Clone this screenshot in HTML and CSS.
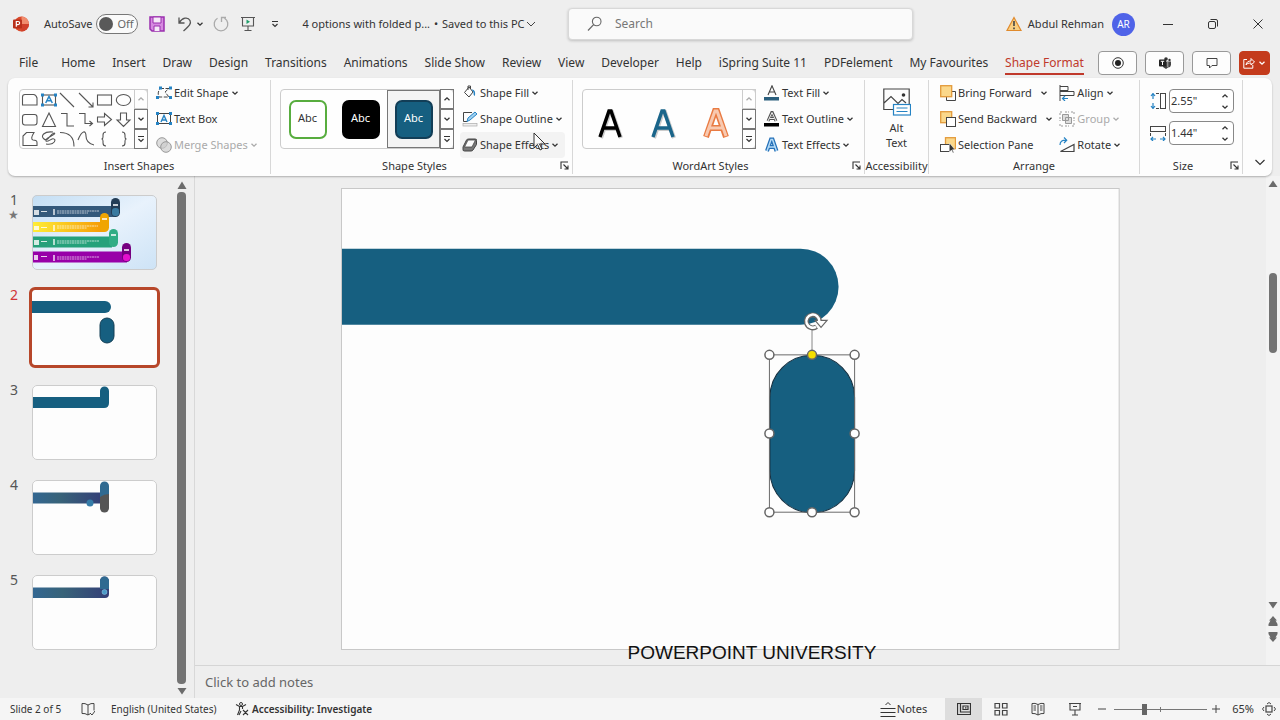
FILE: index.html
```html
<!DOCTYPE html>
<html lang="en">
<head>
<meta charset="utf-8">
<title>4 options with folded p... - PowerPoint</title>
<link rel="stylesheet" href="styles.css">
</head>
<body>
<svg class="sprite" aria-hidden="true">
  <symbol id="chev" viewBox="0 0 8 8"><path d="M1.500 2.800 4 5.200 6.500 2.800" fill="none" stroke="currentColor" stroke-width="1.300"/></symbol>
  <symbol id="chev-up" viewBox="0 0 8 8"><path d="M1.500 5.200 4 2.800 6.500 5.200" fill="none" stroke="currentColor" stroke-width="1.300"/></symbol>
  <symbol id="more" viewBox="0 0 8 8"><path d="M1 1.500H7M1.500 4 4 6.500 6.500 4" fill="none" stroke="currentColor" stroke-width="1.200"/></symbol>
  <symbol id="launch" viewBox="0 0 9 9"><path d="M1 8V1H8M3.500 3.500 8 8M8 4.500V8H4.500" fill="none" stroke="currentColor" stroke-width="1.100"/></symbol>
</svg>

<header class="titlebar">
  <div class="title-left">
    <svg class="i16" viewBox="0 0 16 16"><circle cx="8.500" cy="8" r="7.500" fill="#d9492b"/><path d="M8.500.5A7.500 7.500 0 0 1 16 8H8.500z" fill="#f08b6c"/><path d="M8.500 15.500A7.500 7.500 0 0 0 16 8H8.500z" fill="#d0402a"/><rect x="0" y="3.500" width="9" height="9" rx="1" fill="#b9301a"/><path d="M3.300 10.700V5.500h1.800a1.500 1.500 0 0 1 0 3.100H3.300" fill="none" stroke="#fff" stroke-width="1.200"/></svg>
    <label class="autosave" for="autosave">AutoSave</label>
    <span class="toggle"><input type="checkbox" id="autosave"><span>Off</span></span>
    <button class="tb save" aria-label="Save"><svg class="i16" viewBox="0 0 16 16"><path d="M1 1h14v14H3L1 13z" fill="#d68be0" stroke="#9a2fae" stroke-width="1.500"/><path d="M4 1h8v6H4z" fill="#f6e9f8" stroke="#9a2fae"/><path d="M5 15v-5h6v5" fill="#f6e9f8" stroke="#9a2fae"/></svg></button>
    <button class="tb undo" aria-label="Undo"><svg class="i16" viewBox="0 0 16 16"><path d="M2 1.500V7h5.500M2.300 6.800C5 1.500 11 .5 13 4.500c1.500 3-.5 5-6.500 10.500" fill="none" stroke="#555" stroke-width="1.300"/></svg><svg class="i8" ><use href="#chev"/></svg></button>
    <button class="tb redo" aria-label="Redo"><svg class="i16" viewBox="0 0 16 16"><path d="M4.500 2.200a6.800 6.800 0 1 0 7 0M3 1.500h4.500V6" fill="none" stroke="#aaa" stroke-width="1.300" transform="matrix(-1 0 0 1 16 0)"/></svg></button>
    <button class="tb present" aria-label="Start from beginning"><svg class="i16" viewBox="0 0 16 16"><path d="M1 1.500h14M2.500 1.500V10h11V1.500M8 10v4.500M4.500 14.500h7" fill="none" stroke="#555" stroke-width="1.100"/><path d="M6.500 3.500v4.500L10 5.700z" fill="#1e9e6a"/></svg></button>
    <button class="tb custom" aria-label="Customize"><svg class="i8"><use href="#more"/></svg></button>
    <span class="doc">4 options with folded p...</span><span class="dot">•</span><span class="saved">Saved to this PC</span>
    <svg class="i12" viewBox="0 0 12 12"><path d="M2 4l4 4 4-4" fill="none" stroke="#444"/></svg>
  </div>
  <div class="search">
    <svg class="i16" viewBox="0 0 16 16"><circle cx="9.700" cy="5.500" r="4.300" fill="none" stroke="#666" stroke-width="1.100"/><path d="M6.600 8.700 1 14.500" stroke="#666" stroke-width="1.200"/></svg>
    <input type="text" placeholder="Search" aria-label="Search">
  </div>
  <div class="title-right">
    <svg class="i16" viewBox="0 0 16 16"><path d="M8 1.500 15 14.500H1z" fill="#f9cf82" stroke="#e08a2c" stroke-width="1.200"/><path d="M8 5v5M8 11.500v1.700" stroke="#444" stroke-width="1.600"/></svg>
    <span class="user">Abdul Rehman</span><span class="avatar">AR</span>
    <button class="win" aria-label="Minimize"><svg class="i10" viewBox="0 0 10 10"><path d="M0 5.500h10" stroke="#333"/></svg></button>
    <button class="win" aria-label="Restore"><svg class="i10" viewBox="0 0 10 10"><rect x=".5" y="2.500" width="7" height="7" rx="1.500" fill="none" stroke="#333"/><path d="M2.500.5H8A1.500 1.500 0 0 1 9.500 2v5.500" fill="none" stroke="#333"/></svg></button>
    <button class="win" aria-label="Close"><svg class="i10" viewBox="0 0 10 10"><path d="M.5.500l9 9M9.500.500l-9 9" stroke="#333"/></svg></button>
  </div>
</header>

<div class="tabbar">
  <nav class="tabs">
    <a href="#" class="file">File</a><a href="#">Home</a><a href="#">Insert</a><a href="#">Draw</a><a href="#">Design</a><a href="#">Transitions</a><a href="#">Animations</a><a href="#">Slide Show</a><a href="#">Review</a><a href="#">View</a><a href="#">Developer</a><a href="#">Help</a><a href="#">iSpring Suite 11</a><a href="#">PDFelement</a><a href="#">My Favourites</a><a href="#" class="active">Shape Format</a>
  </nav>
  <div class="tab-actions">
    <button class="pill" aria-label="Record"><svg class="i12" viewBox="0 0 12 12"><circle cx="6" cy="6" r="5.300" fill="none" stroke="#333"/><circle cx="6" cy="6" r="3" fill="#222"/></svg></button>
    <button class="pill" aria-label="Teams"><svg class="i12" viewBox="0 0 12 12"><circle cx="7" cy="2" r="1.800" fill="#333"/><circle cx="10.500" cy="3" r="1.200" fill="#333"/><path d="M5 4.500h7V8a3 3 0 0 1-3 2.500L7 12l-3-2z" fill="#444"/><path d="M8.800 4.500V10" stroke="#ddd" stroke-width=".7"/><rect y="2.500" width="7" height="7" rx=".8" fill="#222"/><path d="M1.800 4.300h3.400M3.500 4.300v3.700" stroke="#fff"/></svg></button>
    <button class="pill" aria-label="Comments"><svg class="i12" viewBox="0 0 12 12"><path d="M1 1.500h10v7H6L3.500 11V8.500H1z" fill="none" stroke="#444"/></svg></button>
    <button class="pill share" aria-label="Share"><svg class="i12" viewBox="0 0 12 12"><path d="M4 2.500H.8v8.700h9V8M3 8c.5-3 2-4 5-4V1.500L11.500 5 8 8V6C5.500 6 4 6.500 3 8z" fill="none" stroke="#fff"/></svg><svg class="i8"><use href="#chev"/></svg></button>
  </div>
</div>

<section class="ribbon">
  <div class="group g-insert">
    <div class="body">
      <div class="gallery">
        <svg class="shapes" viewBox="0 0 114 58" fill="none" stroke="#555" stroke-width="1.100">
          <path d="M2.500 15V7q0-2.500 2.500-2.500h8.500q2.500 0 3.500 3.500v7z"/>
          <rect x="22.500" y="5" width="13" height="10"/><path d="M25.700 13 29 6.500 32.300 13M27 10.800h4" stroke="#2583c4" stroke-width="1.500"/><g fill="#2583c4" stroke="none"><rect x="21" y="3.500" width="3" height="3"/><rect x="34" y="3.500" width="3" height="3"/><rect x="21" y="13.500" width="3" height="3"/><rect x="34" y="13.500" width="3" height="3"/></g>
          <path d="M40 3l14 14M59 3l14 14M73 12.500V17h-4.500"/><rect x="77.500" y="5" width="14" height="10"/><ellipse cx="103.500" cy="10" rx="7.200" ry="5.500"/>
          <rect x="2.500" y="24.500" width="14.500" height="10.500" rx="2.500"/><path d="M29 23l6.500 13.500h-13z"/><path d="M41 23.500h6v12.500h7M59 23.500h6v10h7M69.500 31l3 2.500-3 2.500"/><path d="M77.500 27h7v-3.500l7 6-7 6V32h-7zM100.500 23h6v7h3.500l-6.500 6.500-6.500-6.500h3.500z"/>
          <path d="M3 55.500V46l3.500-3.500H14q-4 6.500-1 7.500 4 0 4 2.500v3zM33 42c-9-1-13 4-9 7s5-4 10-6c4 1-10 5-8 8 2 2 7-5 9-1 0 3-4 5-9 4M40 42.500q14 0 14 14M58 50c4-10 8-10 8-4s4 8 8 9M86 42q-3 0-3 3v2q0 2-1.500 2 1.500 0 1.500 2v2q0 3 3 3M102 42q3 0 3 3v2q0 2 1.500 2-1.500 0-1.500 2v2q0 3-3 3"/>
        </svg>
        <div class="steps"><button class="off" aria-label="Up"><svg class="i8"><use href="#chev-up"/></svg></button><button aria-label="Down"><svg class="i8"><use href="#chev"/></svg></button><button aria-label="More shapes"><svg class="i8"><use href="#more"/></svg></button></div>
      </div>
      <div class="cmds">
        <button><svg class="i16" viewBox="0 0 16 16"><path d="M4 3.500h9L9 7l4 5H3Q1 8 4 3.500" fill="none" stroke="#444" stroke-dasharray="4 1.500"/><g fill="#2583c4"><rect x="3" y="1.500" width="3" height="3"/><rect x="13" y="1.500" width="3" height="3"/><rect y="11" width="3" height="3"/><rect x="13" y="11" width="3" height="3"/></g></svg><span>Edit Shape</span><svg class="i8"><use href="#chev"/></svg></button>
        <button><svg class="i16" viewBox="0 0 16 16"><rect x="1.500" y="2.500" width="13" height="10" fill="none" stroke="#444"/><path d="M5 11 8 4.500 11 11M6 9h4" fill="none" stroke="#2583c4" stroke-width="1.400"/><g fill="#2583c4"><rect y="1" width="3" height="3"/><rect x="13" y="1" width="3" height="3"/><rect y="11" width="3" height="3"/><rect x="13" y="11" width="3" height="3"/></g></svg><span>Text Box</span></button>
        <button disabled><svg class="i16" viewBox="0 0 16 16"><circle cx="6" cy="6" r="5.300" fill="#ddd" stroke="#999"/><circle cx="10" cy="10" r="5.300" fill="#ccc" fill-opacity=".7" stroke="#999"/></svg><span>Merge Shapes</span><svg class="i8"><use href="#chev"/></svg></button>
      </div>
    </div>
    <div class="caption">Insert Shapes</div>
  </div>

  <div class="group g-styles">
    <div class="body">
      <div class="gallery">
        <button class="tile"><span class="abc outline">Abc</span></button><button class="tile"><span class="abc black">Abc</span></button><button class="tile picked"><span class="abc blue">Abc</span></button>
        <div class="steps"><button aria-label="Up"><svg class="i8"><use href="#chev-up"/></svg></button><button aria-label="Down"><svg class="i8"><use href="#chev"/></svg></button><button aria-label="More styles"><svg class="i8"><use href="#more"/></svg></button></div>
      </div>
      <div class="cmds">
        <button><svg class="i16" viewBox="0 0 16 16"><path d="M7 2 2.500 7.500 7 12l4-5zM6 5V1h2.500v3" fill="none" stroke="#444"/><path d="M9.500 4.500Q14 4 13 11q-2-1-1.500-4z" fill="#2583c4"/></svg><span>Shape Fill</span><svg class="i8"><use href="#chev"/></svg></button>
        <button><svg class="i16" viewBox="0 0 16 16"><path d="M10 1.500H1.500v9H5" fill="none" stroke="#444"/><path d="M5 10.500 6 7l7-6 2 2-7 6z" fill="#9fd0f0" stroke="#2583c4"/><rect x="1" y="12.500" width="14" height="2.500" fill="#eee" stroke="#aaa" stroke-width=".7"/></svg><span>Shape Outline</span><svg class="i8"><use href="#chev"/></svg></button>
        <button class="hover"><svg class="i16" viewBox="0 0 16 16"><path d="M1 10 4.500 3q.5-1 2-1h6.500q2 0 1.500 1.500v4L11 13q-.5 1-2 1H2.500Q.5 14 1 12z" fill="#777" stroke="#444"/><path d="M6 3h7.500L10 10H2.500z" fill="#fafafa" stroke="#444" stroke-width=".8"/></svg><span>Shape Effects</span><svg class="i8"><use href="#chev"/></svg></button>
      </div>
    </div>
    <div class="caption">Shape Styles</div><button class="launcher" aria-label="Shape dialog"><svg class="i9"><use href="#launch"/></svg></button>
  </div>

  <div class="group g-word">
    <div class="body">
      <div class="gallery">
        <button class="tile"><svg class="wa" viewBox="0 0 28 34"><path d="M4 32 13 6h2l9 26M7.500 23h13" fill="none" stroke="#ccc" stroke-width="4" transform="translate(1 1)"/><path d="M4 32 13 6h2l9 26M7.500 23h13" fill="none" stroke="#000" stroke-width="3.500"/></svg></button>
        <button class="tile"><svg class="wa" viewBox="0 0 28 34"><path d="M4 32 13 6h2l9 26M7.500 23h13" fill="none" stroke="#ccc" stroke-width="4" transform="translate(1 1)"/><path d="M4 32 13 6h2l9 26M7.500 23h13" fill="none" stroke="#1a658a" stroke-width="3.500"/></svg></button>
        <button class="tile"><svg class="wa" viewBox="0 0 28 34"><path d="M4 32 13 6h2l9 26M7.500 23h13" fill="none" stroke="#e97b43" stroke-width="6"/><path d="M4 31 13 6h2l9 25M7.500 23h13" fill="none" stroke="#f8c9b0" stroke-width="3"/></svg></button>
        <div class="steps"><button class="off" aria-label="Up"><svg class="i8"><use href="#chev-up"/></svg></button><button aria-label="Down"><svg class="i8"><use href="#chev"/></svg></button><button aria-label="More WordArt"><svg class="i8"><use href="#more"/></svg></button></div>
      </div>
      <div class="cmds">
        <button><svg class="i16" viewBox="0 0 16 16"><path d="M4 10 8 .8 12 10M5.500 7h5" fill="none" stroke="#444" stroke-width="1.100"/><rect x="0" y="12" width="15" height="3.500" fill="#2b5f7d"/></svg><span>Text Fill</span><svg class="i8"><use href="#chev"/></svg></button>
        <button><svg class="i16" viewBox="0 0 16 16"><path d="M4 10 8 1 12 10M5.500 7.500h5" fill="none" stroke="#555" stroke-width="3"/><path d="M4 10 8 1.500 12 10M5.500 7.500h5" fill="none" stroke="#eee"/><rect x="0" y="12" width="15" height="3.500" fill="#000"/></svg><span>Text Outline</span><svg class="i8"><use href="#chev"/></svg></button>
        <button><svg class="i16" viewBox="0 0 16 16"><path d="M3 14 7 2.500h1.500L12.500 14M4.500 10h7" fill="none" stroke="#2470b8" stroke-width="4"/><path d="M3 14 7 2.500h1.500L12.500 14M4.500 10h7" fill="none" stroke="#b5dbf7" stroke-width="1.500"/></svg><span>Text Effects</span><svg class="i8"><use href="#chev"/></svg></button>
      </div>
    </div>
    <div class="caption">WordArt Styles</div><button class="launcher" aria-label="Text dialog"><svg class="i9"><use href="#launch"/></svg></button>
  </div>

  <div class="group g-alt">
    <button class="alt"><svg class="i28" viewBox="0 0 28 28"><path d="M10 21.500H.8V1h25.400v15M1 15 8 8.500l7 7 4-4 4 3.500" fill="none" stroke="#444" stroke-width="1.200"/><circle cx="20.500" cy="7" r="1.800" fill="#333"/><rect x="10.500" y="16.500" width="17" height="10.500" fill="#fff" stroke="#2583c4" stroke-width="1.200"/><path d="M13.500 20h11M13.500 23.500h11" stroke="#2583c4" stroke-width="1.200"/></svg><span>Alt<br>Text</span></button>
    <div class="caption">Accessibility</div>
  </div>

  <div class="group g-arr">
    <div class="body">
      <div class="cmds">
        <button><svg class="i16" viewBox="0 0 16 16"><path d="M12 6.500h3.500v9h-9V12" fill="none" stroke="#444"/><rect x=".7" y=".7" width="11" height="11" fill="#fbd88b" stroke="#e39a3b" stroke-width="1.300"/></svg><span>Bring Forward</span><svg class="i8 split"><use href="#chev"/></svg></button>
        <button><svg class="i16" viewBox="0 0 16 16"><rect x=".7" y=".7" width="11" height="11" fill="#fbd88b" stroke="#e39a3b" stroke-width="1.300"/><rect x="6.500" y="6.500" width="9" height="9" fill="#fff" stroke="#444"/></svg><span>Send Backward</span><svg class="i8 split"><use href="#chev"/></svg></button>
        <button><svg class="i16" viewBox="0 0 16 16"><rect x="5.500" y=".7" width="10" height="11" fill="#fbd88b" stroke="#e39a3b" stroke-width="1.300"/><rect x=".5" y="7.500" width="9" height="7" fill="#fff" stroke="#444"/><path d="M9.500 6v9l2-2 1.500 3 1-.6-1.500-2.700H15z" fill="#333" stroke="#fff" stroke-width=".5"/></svg><span>Selection Pane</span></button>
      </div>
      <div class="cmds">
        <button><svg class="i16" viewBox="0 0 16 16"><path d="M1 0v16M1 1.500h8v4H1M1 6.500h14v4H1" fill="none" stroke="#444"/><path d="M9 13.500H3.500M6 11l-2.500 2.500L6 16" fill="none" stroke="#2583c4" stroke-width="1.200"/></svg><span>Align</span><svg class="i8"><use href="#chev"/></svg></button>
        <button disabled><svg class="i16" viewBox="0 0 16 16"><path d="M3.500 3.500h6v6h-6zM6.500 6.500h6v6h-6z" fill="#ddd" stroke="#999"/><path d="M1 4V1h3M12 1h3v3M15 12v3h-3M4 15H1v-3M6 1h4M6 15h4M1 6v4M15 6v4" fill="none" stroke="#999" stroke-dasharray="2 1"/></svg><span>Group</span><svg class="i8"><use href="#chev"/></svg></button>
        <button><svg class="i16" viewBox="0 0 16 16"><path d="M1.500 14.500h13.500V7.500z" fill="none" stroke="#444" stroke-width="1.200"/><path d="M1 8q0-5 6-4.800M5 .500 7.700 3.200 5 6" fill="none" stroke="#2583c4" stroke-width="1.200"/></svg><span>Rotate</span><svg class="i8"><use href="#chev"/></svg></button>
      </div>
    </div>
    <div class="caption">Arrange</div>
  </div>

  <div class="group g-size">
    <div class="sizes">
      <div class="size"><svg class="i16" viewBox="0 0 16 16"><path d="M3 .5v5.500M1 3l2-2.500L5 3M3 10v5.500M1 13l2 2.500L5 13" fill="none" stroke="#2583c4" stroke-width="1.200"/><path d="M6 .5h3M6 15.500h3" stroke="#444"/><rect x="10.500" y=".5" width="5" height="15" fill="none" stroke="#444"/></svg><span class="spin"><input aria-label="Shape height" value='2.55"'><span class="arrows"><svg class="i8"><use href="#chev-up"/></svg><svg class="i8"><use href="#chev"/></svg></span></span></div>
      <div class="size"><svg class="i16" viewBox="0 0 16 16"><rect x=".5" y="1.500" width="15" height="5" fill="none" stroke="#444"/><path d="M.5 8v3M15.500 8v3" stroke="#444"/><path d="M6 14H1M3 12l-2 2 2 2M10 14h5M13 12l2 2-2 2" fill="none" stroke="#2583c4" stroke-width="1.200"/></svg><span class="spin"><input aria-label="Shape width" value='1.44"'><span class="arrows"><svg class="i8"><use href="#chev-up"/></svg><svg class="i8"><use href="#chev"/></svg></span></span></div>
    </div>
    <div class="caption">Size</div><button class="launcher" aria-label="Size dialog"><svg class="i9"><use href="#launch"/></svg></button>
  </div>
  <div class="group g-end"><button class="collapse" aria-label="Collapse ribbon"><svg class="i12" viewBox="0 0 12 12"><path d="M1.500 4 6 8.500 10.500 4" fill="none" stroke="#333" stroke-width="1.200"/></svg></button></div>
  <svg class="cursor" viewBox="0 0 13 20"><path d="M1 1v15l3.500-3.500L7 18l2-1-2.500-5H12z" fill="#fff" fill-opacity=".75" stroke="#333"/></svg>
</section>

<main class="work">
  <aside class="thumbs">
    <div class="thumb-row"><span class="num">1<br><span class="star">★</span></span>
      <svg class="thumb" viewBox="0 0 125 75">
        <defs><linearGradient id="bg" x2="1" y2="1"><stop stop-color="#c3def4"/><stop offset=".5" stop-color="#e8f2fc"/><stop offset="1" stop-color="#cde3f6"/></linearGradient>
        <linearGradient id="y"><stop stop-color="#ffee38"/><stop offset="1" stop-color="#f59a05"/></linearGradient></defs>
        <rect width="125" height="75" fill="url(#bg)"/>
        <g fill="#34597b"><rect y="11" width="84" height="11"/><rect x="79" y="3" width="9" height="19" rx="4.500" fill="#243d55"/><rect x="80" y="13" width="7" height="8" rx="3" fill="#397aa0"/></g>
        <g fill="url(#y)"><rect y="27" width="72" height="10"/><rect x="68" y="18" width="9" height="19" rx="4.500" fill="#f0a502"/></g>
        <g fill="#26a17b"><rect y="41.500" width="80" height="11"/><rect x="77" y="34" width="9" height="18" rx="4.500" fill="#30ad85"/></g>
        <g fill="#9800a8"><rect y="56.500" width="95" height="11"/><rect x="90" y="48" width="9" height="19" rx="4.500" fill="#750080"/><rect x="91" y="59" width="7" height="7" rx="3" fill="#e410cd"/></g>
        <g fill="#fff" opacity=".8"><rect x="2" y="15" width="5" height="5"/><rect x="2" y="31" width="5" height="4"/><rect x="2" y="45" width="5" height="5"/><rect x="2" y="60" width="4" height="5"/><rect x="9" y="16" width="6" height="1"/><rect x="9" y="32" width="6" height="1"/><rect x="9" y="46" width="6" height="1"/><rect x="9" y="61" width="6" height="1"/></g>
        <path d="M22 14v6M22 30v6M22 44v6M22 60v6M81 10h5M70 24h5M79 40h5M92 55h5" stroke="#fff" stroke-width="1.300"/><path d="M25 16h42M25 18h31M25 31h41M25 33h30M25 46h42M25 48h30M25 62h42M25 64h30" stroke="#fff" stroke-dasharray="2 .5" opacity=".65"/>
      </svg></div>
    <div class="thumb-row current"><span class="num">2</span>
      <svg class="thumb" viewBox="0 0 125 75"><path d="M0 11h73a6 6 0 0 1 0 12H0z" fill="#165f80"/><rect x="68" y="28" width="14" height="25" rx="7" fill="#165f80" stroke="#123e55"/></svg></div>
    <div class="thumb-row"><span class="num">3</span>
      <svg class="thumb" viewBox="0 0 125 75"><path d="M0 12h68V6a4.500 4.500 0 0 1 9 0v12q0 5-5 5H0z" fill="#165f80"/></svg></div>
    <div class="thumb-row"><span class="num">4</span>
      <svg class="thumb" viewBox="0 0 125 75"><defs><linearGradient id="b4"><stop stop-color="#336792"/><stop offset=".4" stop-color="#386379"/><stop offset="1" stop-color="#343f77"/></linearGradient></defs><rect y="12.500" width="70" height="11" fill="url(#b4)"/><rect x="68" y="1.500" width="9" height="25" rx="4.500" fill="#306a91"/><path d="M68 17q4-3 9-3v14a4.500 4.500 0 0 1-9 0z" fill="#555"/><circle cx="58" cy="23" r="3.500" fill="#357ca8"/></svg></div>
    <div class="thumb-row"><span class="num">5</span>
      <svg class="thumb" viewBox="0 0 125 75"><path d="M0 12.500h68V6a4.500 4.500 0 0 1 9 0v13q0 4-4 4H0z" fill="url(#b4)"/><path d="M68 14V6a4.500 4.500 0 0 1 9 0v8z" fill="#306a91"/><circle cx="72.500" cy="17" r="2.500" fill="#4b9ac7" stroke="#91c8e8" stroke-width=".5"/></svg></div>
  </aside>
  <div class="vbar"><svg class="i10" viewBox="0 0 10 10"><path d="M5 1.500 9.500 9h-9z"/></svg><span class="track"></span><svg class="i10" viewBox="0 0 10 10"><path d="M.5 2h9L5 8.500z"/></svg></div>
  <div class="pane">
    <div class="editor">
      <div class="canvas">
        <svg class="slide" viewBox="0 0 777 461">
          <rect x=".5" y=".5" width="776" height="460" fill="#fdfdfd" stroke="#c8c8c8"/>
          <path d="M1 60.500h457.500a38 38 0 0 1 0 76H1z" fill="#165f80"/>
          <rect x="428" y="167" width="84.500" height="157" rx="42" fill="#165f80" stroke="#142f40"/>
          <path d="M470 138v29" stroke="#888"/><rect x="427.500" y="166.500" width="85" height="157" fill="none" stroke="#6b6b6b"/>
          <g fill="#fff" stroke="#666" stroke-width="1.500"><circle cx="427.500" cy="166.500" r="4.500"/><circle cx="512.500" cy="166.500" r="4.500"/><circle cx="427.500" cy="245" r="4.500"/><circle cx="512.500" cy="245" r="4.500"/><circle cx="427.500" cy="323.500" r="4.500"/><circle cx="470" cy="323.500" r="4.500"/><circle cx="512.500" cy="323.500" r="4.500"/><circle cx="470" cy="166.500" r="4.500" fill="#f5df00"/></g>
          <path d="M474.500 138.500a6.500 6.500 0 1 1 2.800-5.500" fill="none" stroke="#666" stroke-width="5"/><path d="M473 132h12l-6 7z" fill="#fff" stroke="#666" stroke-width="1.200"/><path d="M474 138.500a6.500 6.500 0 1 1 3.300-5.500" fill="none" stroke="#fff" stroke-width="2.500"/>
        </svg>
        <span class="watermark">POWERPOINT UNIVERSITY</span>
      </div>
      <div class="scroll"><svg class="i10" viewBox="0 0 10 10"><path d="M5 1.500 9.500 8h-9z"/></svg><span class="thumbbar"></span><span class="fill"></span><svg class="i10" viewBox="0 0 10 10"><path d="M.5 2h9L5 8.500z"/></svg><svg class="i10" viewBox="0 0 10 10"><path d="M5 0l4 4.500H7.500L9.500 8v2h-9V8l2-3.500H1z"/></svg><svg class="i10" viewBox="0 0 10 10"><path d="M.5 0h9v2l-2 3.500H9L5 10 1 5.500h1.500L.5 2z"/></svg></div>
    </div>
    <div class="notes">Click to add notes</div>
  </div>
</main>

<footer class="status">
  <span class="s-slide">Slide 2 of 5</span>
  <svg class="i14" viewBox="0 0 14 14"><path d="M7 3Q4 1 1 1.500v10Q4 11 7 13q1-1 2-1M7 3q3-2 6-1.500v7M7 3v10M9 11l2 2 3-4" fill="none" stroke="#444"/></svg>
  <span class="s-lang">English (United States)</span>
  <button class="s-acc"><svg class="i14" viewBox="0 0 14 14"><circle cx="6" cy="2" r="1.500" fill="none" stroke="#333"/><path d="M1 2.500 4.500 4.500h3L11 2.500M4.500 4.500V8L2.500 13M7.500 4.500V7M4 13l2-4M8 8l5 5M13 8l-5 5" fill="none" stroke="#333" stroke-width="1.100"/></svg><span>Accessibility: Investigate</span></button>
  <div class="s-right">
    <button class="s-notes"><svg class="i16" viewBox="0 0 16 16"><path d="M5.500 4 8 1.500 10.500 4M.5 7.500h15M.5 11.500h15M.5 15.500h15" fill="none" stroke="#333"/></svg><span>Notes</span></button>
    <button class="view on" aria-label="Normal"><svg class="i14" viewBox="0 0 14 14"><path d="M.5 1.500h13v11H.5zM3.500 1.500v8.500h10M6 4h5v3.500H6zM8 5.800h1.500" fill="none" stroke="#333" stroke-width="1.200"/></svg></button>
    <button class="view" aria-label="Slide sorter"><svg class="i14" viewBox="0 0 14 14"><path d="M1 1.500h4.500V6H1zM8.500 1.500H13V6H8.500zM1 8.500h4.500V13H1zM8.500 8.500H13V13H8.500z" fill="none" stroke="#444" stroke-width="1.200"/></svg></button>
    <button class="view" aria-label="Reading view"><svg class="i14" viewBox="0 0 14 14"><path d="M7 2.500Q4 .8 1 1.500v10q3-.5 6 1.500 3-2 6-1.500v-10Q10 .8 7 2.500zV13M2.500 4H5M2.500 6H5M2.500 8H5M9 4h2.500M9 6h2.500M9 8h2.500" fill="none" stroke="#444"/></svg></button>
    <button class="view" aria-label="Slide show"><svg class="i14" viewBox="0 0 14 14"><path d="M1 1.500h12M2 1.500v6.500h10V1.500M5 4.500h4M7 8v5M4 13h6" fill="none" stroke="#444" stroke-width="1.100"/></svg></button>
    <button class="zoomer" aria-label="Zoom out"><svg class="i8" viewBox="0 0 8 8"><path d="M0 4h8" stroke="#444"/></svg></button>
    <input class="zoom" type="range" min="0" max="100" value="31" aria-label="Zoom">
    <button class="zoomer" aria-label="Zoom in"><svg class="i8" viewBox="0 0 8 8"><path d="M0 4h8M4 0v8" stroke="#444"/></svg></button>
    <span class="pct">65%</span>
    <button class="fit" aria-label="Fit slide"><svg class="i14" viewBox="0 0 14 14"><rect x="4" y="4" width="6" height="6" fill="none" stroke="#444" stroke-width="1.200"/><path d="M5 2 7 .5 9 2M5 12l2 1.500L9 12M2 5 .5 7 2 9M12 5l1.500 2L12 9" fill="none" stroke="#444"/></svg></button>
  </div>
</footer>
</body>
</html>
```

FILE: styles.css
```css
* { box-sizing: border-box; }
body {
  margin: 0; height: 100vh; display: flex; flex-direction: column; overflow: hidden;
  background: #eee; color: #333; font: 11px/16px "Noto Sans", "Open Sans", sans-serif;
}
button, input { font: inherit; color: inherit; margin: 0; padding: 0; border: 0; background: none; }
button { display: flex; align-items: center; justify-content: center; white-space: nowrap; }
a { color: inherit; text-decoration: none; }
svg { display: block; flex: none; }
.sprite { position: absolute; width: 0; height: 0; }
.i8 { width: 8px; height: 8px; }
.i9 { width: 9px; height: 9px; }
.i10 { width: 10px; height: 10px; }
.i12 { width: 12px; height: 12px; }
.i14 { width: 14px; height: 14px; }
.i16 { width: 16px; height: 16px; }
.i28 { width: 28px; height: 28px; }

/* Title bar */
.titlebar { height: 48px; flex: none; display: grid; grid-template-columns: 568fr 345fr 367fr; align-items: center; white-space: nowrap; }
.title-left { display: flex; align-items: center; padding-left: 13px; }
.autosave { margin-left: 15px; }
.toggle { display: flex; align-items: center; gap: 4px; width: 42px; height: 20px; margin-left: 4px; padding-left: 2px; border: 1px solid #777; border-radius: 10px; background: #fafafa; color: #666; }
.toggle input { appearance: none; width: 14px; height: 14px; border-radius: 50%; background: #595959; }
.save { margin-left: 11px; }
.undo { margin-left: 12px; gap: 3px; }
.redo { margin-left: 9px; }
.present { margin-left: 11px; }
.custom { margin-left: 15px; }
.doc { margin-left: 23px; }
.dot { width: 12px; text-align: center; }
.search { height: 32px; display: flex; align-items: center; gap: 12px; padding-left: 18px; border: 1px solid #d8d8d8; border-radius: 4px; background: #fafafa; box-shadow: 0 1px 3px #0003; }
.search input { flex: 1; min-width: 0; font-size: 12px; outline: 0; }
.search input::placeholder { color: #777; opacity: 1; }
.title-right { display: flex; align-items: center; justify-content: flex-end; padding-right: 17px; }
.user { margin-left: 6px; }
.avatar { width: 23px; height: 23px; margin: 0 28px 0 8px; border-radius: 50%; background: #4f63e8; color: #fff; font-size: 10px; line-height: 23px; text-align: center; }
.win { width: 10px; margin-left: 35px; }
.avatar + .win { margin-left: 0; }

/* Tabs */
.tabbar { height: 30px; flex: none; display: flex; align-items: center; padding: 0 10px 0 19px; }
.tabs { flex: 1; display: flex; justify-content: space-between; font-size: 12px; white-space: nowrap; }
.tabs a { height: 24px; line-height: 24px; border-bottom: 2px solid transparent; }
.tabs .file { margin-right: 6px; }
.tabs .active { color: #c0392b; border-color: #c0392b; }
.tab-actions { display: flex; gap: 8px; margin-left: 14px; }
.pill { width: 39px; height: 24px; border: 1px solid #999; border-radius: 4px; background: #fdfdfd; }
.share { width: 31px; gap: 3px; border-color: #c43b1c; background: #c43b1c; color: #fff; }

/* Ribbon */
.ribbon { position: relative; flex: none; display: grid; grid-template-columns: 263fr 302fr 292fr 64fr 211fr 103fr 29fr; margin: 0 8px; padding: 2px 0; border-radius: 7px; background: #fdfdfd; box-shadow: 0 1px 2px #0004; }
.group { position: relative; min-width: 0; display: flex; flex-direction: column; border-right: 1px solid #d8d8d8; }
.g-end { border: 0; justify-content: flex-end; }
.body { height: 78px; display: flex; gap: 6px; padding-left: 9px; }
.g-insert .body { padding-left: 11px; }
.caption { height: 16px; text-align: center; white-space: nowrap; }
.g-styles .caption { padding-right: 14px; }
.g-word .caption { padding-right: 16px; }
.g-size .caption { padding-right: 16px; }
.launcher { position: absolute; right: 3px; bottom: 4px; }
.gallery { height: 60px; display: flex; flex: none; margin-top: 9px; border: 1px solid #ccc; border-radius: 4px; background: #fefefe; }
.shapes { width: 114px; height: 58px; }
.steps { width: 14px; display: grid; grid-template-rows: 1fr 1fr 1fr; margin: -1px -1px -1px 0; }
.steps button { border: 1px solid #777; }
.steps .off { border-color: #ccc; color: #aaa; }
.tile { width: 53px; height: 58px; }
.picked { border: 1px solid #777; background: #f4f4f4; }
.abc { width: 38px; height: 39px; line-height: 32px; border-radius: 7px; border: 2px solid #000; }
.outline { border-color: #58ad3f; background: #fff; }
.black { background: #000; color: #fff; }
.blue { border-color: #123e57; background: #165f80; color: #fff; }
.wa { width: 28px; height: 34px; }
.g-word .tile { width: 53px; padding-top: 6px; }
.cmds { display: flex; flex-direction: column; align-items: flex-start; }
.cmds button { height: 26px; gap: 2px; padding: 0 2px; }
.cmds button:disabled { color: #aaa; }
.cmds .hover { background: #f3f3f3; border-radius: 4px; padding-right: 6px; }
.g-arr .cmds { flex: 115 0 0; }
.g-arr .cmds + .cmds { flex: 80 0 0; }
.g-arr .body { gap: 2px; }
.g-arr .split { margin-left: 6px; }
.alt { height: 78px; flex-direction: column; gap: 4px; }
.alt span { line-height: 15px; }
.sizes { height: 78px; display: flex; flex-direction: column; gap: 8px; padding: 9px 8px 0 10px; }
.size { display: flex; align-items: center; gap: 3px; }
.spin { flex: 1; min-width: 0; height: 24px; display: flex; align-items: center; padding: 0 4px 0 1px; border: 1px solid #888; border-radius: 4px; background: #fff; }
.spin input { flex: 1; min-width: 0; }
.arrows { display: flex; flex-direction: column; gap: 3px; }
.collapse { height: 24px; width: 34px; }
.cursor { position: absolute; left: 525px; top: 54px; width: 13px; height: 20px; }

/* Slide thumbnails */
.work { flex: 1; min-height: 0; display: flex; }
.thumbs { flex: none; display: flex; flex-direction: column; gap: 20px; width: 177px; padding: 19px 0 0 10px; }
.thumb-row { display: flex; gap: 14px; }
.num { width: 8px; font-size: 14px; line-height: 10px; color: #555; }
.star { font-size: 12px; margin-left: -2px; line-height: 20px; color: #777; }
.thumb { width: 125px; height: 75px; border-radius: 5px; background: #fdfdfd; outline: 1px solid #ccc; outline-offset: -1px; }
.current .thumb { outline: 3px solid #b7472a; outline-offset: 0; border-radius: 3px; }
.current .num { color: #d13438; }
.vbar { width: 18px; flex: none; display: flex; flex-direction: column; align-items: flex-start; gap: 2px; padding: 4px 0 2px; border-right: 1px solid #d8d8d8; fill: #6b6b6b; }
.track { flex: 1; width: 9px; border-radius: 4px; background: #737373; }

/* Editor */
.pane { flex: 1; min-width: 0; display: flex; flex-direction: column; }
.editor { flex: 1; min-height: 0; display: flex; border-bottom: 1px solid #d5d5d5; }
.canvas { position: relative; flex: 1; min-width: 0; display: flex; justify-content: center; padding: 12px 0 15px; }
.slide { height: 100%; max-width: 100%; }
.watermark { position: absolute; left: 52%; bottom: 0; transform: translateX(-50%); color: #111; font: 19px/24px "Liberation Sans", Arial, sans-serif; white-space: nowrap; }
.scroll { width: 14px; flex: none; display: flex; flex-direction: column; align-items: center; gap: 6px; padding: 3px 0 23px; background: #f3f3f3; fill: #6b6b6b; }
.thumbbar { width: 8px; height: 80px; margin-top: 78px; border-radius: 4px; background: #737373; }
.fill { flex: 1; }
.notes { height: 32px; flex: none; padding-left: 10px; font-size: 13px; line-height: 32px; color: #666; }

/* Status bar */
.status { height: 22px; flex: none; display: flex; align-items: center; padding-left: 10px; background: #f5f5f5; font-size: 10px; white-space: nowrap; }
.s-slide { width: 71px; }
.s-lang { margin-left: 16px; width: 124px; }
.s-acc { gap: 3px; font-weight: 600; }
.s-right { flex: 1; height: 22px; display: flex; align-items: center; justify-content: flex-end; padding-right: 4px; }
.s-notes { gap: 1px; margin-right: 18px; font-size: 11px; }
.view { width: 37px; height: 22px; }
.on { background: #ddd; }
.zoomer { margin-left: 5px; }
.zoom { width: 93px; height: 16px; margin: 0 0 0 8px; appearance: none; background: linear-gradient(#777, #777) center / 100% 1px no-repeat, linear-gradient(#777, #777) center / 1px 5px no-repeat; }
.zoom::-webkit-slider-thumb { appearance: none; width: 5px; height: 11px; background: #666; }
.pct { margin: 0 8px 0 12px; font-size: 11px; }
```
